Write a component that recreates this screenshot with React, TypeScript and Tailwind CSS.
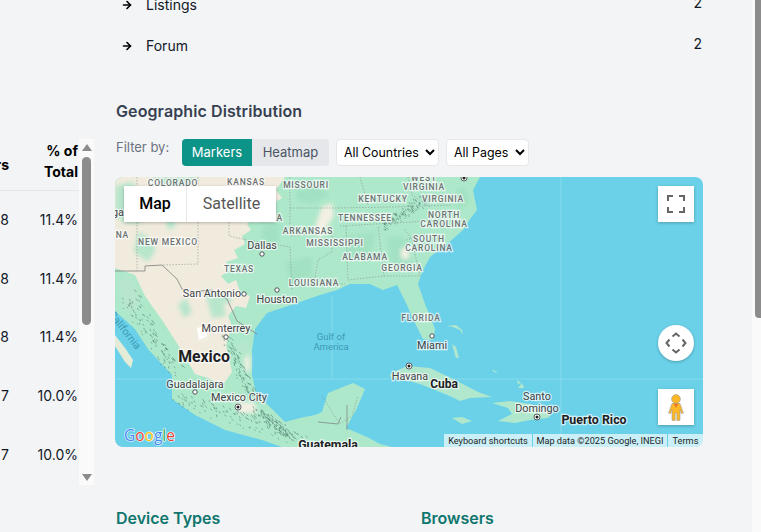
import React from 'react';
import { ArrowRight } from 'lucide-react';

const land =
  'M115 177 L480 177 L473 190 L477 210 L470 219 L463 230 L447 244 L430 257 L422 272 L418 284 L425 304 L435 329 L433 340 L423 339 L413 319 L407 305 L397 285 L383 290 L370 284 L350 284 L337 290 L320 295 L297 303 L267 313 L255 329 L252 350 L252 375 L256 393 L272 409 L285 422 L300 418 L315 415 L322 412 L328 393 L353 383 L365 389 L356 410 L346 428 L367 437 L380 444 L392 447 L282 447 L262 440 L225 430 L195 415 L172 399 L172 375 L148 349 L135 329 L115 311 Z';

const tan =
  'M115 177 L285 177 L276 190 L282 198 L268 206 L256 212 L247 224 L251 230 L242 236 L245 244 L234 250 L238 258 L226 262 L230 270 L221 276 L228 284 L236 280 L240 292 L250 296 L246 308 L236 306 L228 316 L232 326 L226 345 L232 372 L222 386 L208 378 L195 374 L178 345 L162 320 L145 296 L135 275 L115 268 Z';

const greenPatches = [
  'M118 280 L132 276 L140 296 L136 312 L124 308 Z',
  'M115 186 L132 182 L142 196 L150 214 L138 224 L122 222 L115 214 Z',
  'M138 232 L150 238 L156 250 L148 262 L134 252 Z',
  'M205 290 L222 296 L226 316 L212 318 Z',
  'M150 177 L200 177 L190 186 L168 190 Z',
  'M165 215 L172 212 L176 226 L168 230 Z',
  'M222 292 L232 296 L230 304 L222 302 Z',
  'M238 345 L246 340 L248 352 L240 356 Z',
  'M178 305 L186 298 L192 312 L184 318 Z',
];

const greenShades = [
  'M296 190 L320 186 L330 196 L310 204 L296 200 Z',
  'M345 236 L376 232 L372 252 L348 258 Z',
  'M386 238 L404 236 L412 262 L392 268 Z',
  'M452 195 L464 186 L470 200 L458 212 Z',
  'M285 262 L312 256 L312 280 L290 284 Z',
  'M262 226 L282 222 L278 244 L262 242 Z',
];

const lightPatches = [
  'M322 207 L332 203 L334 216 L326 228 L320 240 L315 226 Z',
  'M196 326 L206 322 L210 338 L200 342 Z',
  'M236 402 L254 402 L258 412 L240 414 Z',
  'M244 358 L250 354 L250 370 L245 372 Z',
  'M400 250 L408 246 L410 258 L402 260 Z',
];

const islands = [
  'M390 374 L407 366 L430 368 L457 381 L478 392 L492 397 L470 398 L460 401 L452 397 L440 392 L420 384 L405 380 L391 378 Z',
  'M492 403 L510 401 L530 404 L553 412 L548 418 L530 420 L515 423 L498 421 L512 414 L508 408 Z',
  'M452 418 L462 417 L472 421 L462 424 Z',
  'M452 344 L456 347 L459 358 L456 358 Z',
  'M447 326 L456 325 L462 330 L463 335 L460 330 L453 327 Z',
  'M492 369 L498 373 L494 372 Z',
  'M518 388 L522 383 L524 388 Z',
  'M517 380 L521 383 L518 384 Z',
];

const stateBorders = [
  'M137 177 L137 271',
  'M198 177 L198 264 L162 265',
  'M229 222 L229 236 L247 240 L290 247 L292 290',
  'M290 177 L290 236 L332 232 L332 252 L318 260 L314 284 L345 284',
  'M290 208 L332 208 L392 207 L452 205',
  'M340 226 L412 222 L434 220 L452 228',
  'M346 226 L348 280 L384 276 L378 226',
  'M384 276 L420 276 L412 240 L404 228',
  'M406 240 L428 234',
  'M322 396 L340 424 L352 416 L358 396',
  'M360 177 L368 205',
  'M408 177 L412 195 L430 207',
];

const ranges: [number, number, number, number, number][] = [
  [128, 296, 176, 372, 16],
  [174, 396, 300, 440, 14],
  [226, 338, 254, 400, 10],
  [384, 226, 428, 196, 9],
  [256, 410, 292, 436, 8],
];

// short dark strokes that give the mountain ranges their texture
function rangeStrokes() {
  const out: string[] = [];
  ranges.forEach(([x1, y1, x2, y2, spread]) => {
    for (let i = 0; i < 110; i++) {
      const t = i / 110;
      const a = Math.sin(i * 12.9898 + x1) * 43758.5453;
      const b = Math.sin(i * 78.233 + y1) * 12543.1234;
      const dx = (a - Math.floor(a) - 0.5) * spread;
      const dy = (b - Math.floor(b) - 0.5) * spread;
      const x = x1 + (x2 - x1) * t + dx;
      const y = y1 + (y2 - y1) * t + dy;
      out.push(`M${x.toFixed(1)} ${y.toFixed(1)} l${(1.2 + dx * 0.1).toFixed(1)} ${(1.8 - dy * 0.08).toFixed(1)}`);
    }
  });
  return out.join(' ');
}

type L = { t: string; x: number; y: number; anchor?: 'start' | 'middle' | 'end' };

const states: L[] = [
  { t: 'COLORADO', x: 173, y: 186, anchor: 'middle' },
  { t: 'KANSAS', x: 246, y: 185, anchor: 'middle' },
  { t: 'MISSOURI', x: 306, y: 188, anchor: 'middle' },
  { t: 'WEST', x: 424, y: 181, anchor: 'middle' },
  { t: 'VIRGINIA', x: 424, y: 190, anchor: 'middle' },
  { t: 'KENTUCKY', x: 383, y: 202, anchor: 'middle' },
  { t: 'VIRGINIA', x: 443, y: 202, anchor: 'middle' },
  { t: 'TENNESSEE', x: 365, y: 221, anchor: 'middle' },
  { t: 'NORTH', x: 444, y: 218, anchor: 'middle' },
  { t: 'CAROLINA', x: 444, y: 227, anchor: 'middle' },
  { t: 'OKLAHOMA', x: 283, y: 221, anchor: 'end' },
  { t: 'ARKANSAS', x: 308, y: 234, anchor: 'middle' },
  { t: 'MISSISSIPPI', x: 335, y: 246, anchor: 'middle' },
  { t: 'ALABAMA', x: 365, y: 260, anchor: 'middle' },
  { t: 'SOUTH', x: 429, y: 242, anchor: 'middle' },
  { t: 'CAROLINA', x: 429, y: 251, anchor: 'middle' },
  { t: 'GEORGIA', x: 402, y: 271, anchor: 'middle' },
  { t: 'LOUISIANA', x: 314, y: 286, anchor: 'middle' },
  { t: 'TEXAS', x: 239, y: 272, anchor: 'middle' },
  { t: 'NEW MEXICO', x: 168, y: 245, anchor: 'middle' },
  { t: 'ARIZONA', x: 129, y: 238, anchor: 'end' },
  { t: 'FLORIDA', x: 421, y: 321, anchor: 'middle' },
];

const cities: L[] = [
  { t: 'Dallas', x: 262, y: 249, anchor: 'middle' },
  { t: 'San Antonio', x: 212, y: 297, anchor: 'middle' },
  { t: 'Houston', x: 277, y: 303, anchor: 'middle' },
  { t: 'Monterrey', x: 226, y: 332, anchor: 'middle' },
  { t: 'Guadalajara', x: 195, y: 388, anchor: 'middle' },
  { t: 'Mexico City', x: 239, y: 401, anchor: 'middle' },
  { t: 'Miami', x: 432, y: 349, anchor: 'middle' },
  { t: 'Havana', x: 410, y: 380, anchor: 'middle' },
  { t: 'Santo', x: 537, y: 400, anchor: 'middle' },
  { t: 'Domingo', x: 537, y: 412, anchor: 'middle' },
  { t: 'Vega', x: 124, y: 216, anchor: 'end' },
];

const countries: (L & { size: number })[] = [
  { t: 'Mexico', x: 204, y: 362, anchor: 'middle', size: 15.8 },
  { t: 'Cuba', x: 444, y: 388, anchor: 'middle', size: 12 },
  { t: 'Puerto Rico', x: 594, y: 424, anchor: 'middle', size: 12.4 },
  { t: 'Guatemala', x: 328, y: 449, anchor: 'middle', size: 12.3 },
];

const openDots = [
  [262, 254],
  [244, 294],
  [277, 290],
  [226, 337],
  [195, 392],
  [432, 336],
];

const capitals = [
  [238, 407],
  [409, 366],
  [537, 417],
  [464, 178],
];

const halo = { paintOrder: 'stroke' as const, stroke: '#ffffff', strokeWidth: 2.4, strokeOpacity: 0.7 };

function MapDrawing() {
  return (
    <svg viewBox="115 177 588 270" className="block h-full w-full font-['Roboto',sans-serif]">
      <defs>
        <filter id="soft" x="0" y="0" width="100%" height="100%">
          <feGaussianBlur stdDeviation="0.7" />
        </filter>
        <filter id="softer" x="-10%" y="-10%" width="120%" height="120%">
          <feGaussianBlur stdDeviation="2" />
        </filter>
      </defs>
      <rect x="115" y="177" width="588" height="270" fill="#6ad1e8" />
      <path d="M561 177 V447 M332 296 V380 M115 379 H703" stroke="#86dbee" strokeWidth="1" fill="none" />
      <g filter="url(#soft)">
        <path d={land} fill="#aee8cb" />
      </g>
      <g filter="url(#softer)">
        {greenShades.map((d) => (
          <path key={d} d={d} fill="#a2e2c3" />
        ))}
      </g>
      <g filter="url(#soft)">
        <path d={tan} fill="#f0ebdd" />
      </g>
      <g filter="url(#softer)">
        {greenPatches.map((d) => (
          <path key={d} d={d} fill="#b8e6cc" />
        ))}
        {lightPatches.map((d) => (
          <path key={d} d={d} fill="#f3efe3" />
        ))}
      </g>
      <g filter="url(#soft)">
        <path d="M197 328 L205 326 L207 336 L199 340 Z" fill="#ffffff" />
        <path d="M115 335 L125 348 L133 360 L131 368 L125 362 L115 346 Z" fill="#e4ecd8" />
        {islands.map((d) => (
          <path key={d} d={d} fill="#b1e8cd" />
        ))}
        <path d={rangeStrokes()} stroke="#4f7f6d" strokeWidth="0.8" strokeOpacity="0.7" fill="none" />
      </g>
      <path d={stateBorders.join(' ')} stroke="#7f8a86" strokeOpacity="0.75" strokeWidth="0.7" strokeDasharray="1.5 1.5" fill="none" />
      <path d="M115 271 L145 271 L145 266 L162 265 L177 279 L182 289 L190 292 L212 290 L227 299 L237 321 L257 334" stroke="#8a8a86" strokeWidth="0.9" fill="none" />
      <path d="M318 422 L338 424 L341 417 M347 405 V430" stroke="#7f8a86" strokeWidth="0.8" fill="none" />

      <text x="136" y="350" textAnchor="end" transform="rotate(52 136 350)" fontSize="10.5" fill="#3d9ab5">
        California
      </text>
      <text x="331" y="340" textAnchor="middle" fontSize="9.5" fill="#3d9ab5">
        Gulf of
      </text>
      <text x="331" y="350" textAnchor="middle" fontSize="9.5" fill="#3d9ab5">
        America
      </text>

      {states.map((l) => (
        <text key={l.t + l.x} x={l.x} y={l.y} textAnchor={l.anchor} fontSize="8.5" letterSpacing="0.8" fontWeight="500" fill="#6b7271" style={halo}>
          {l.t}
        </text>
      ))}
      {cities.map((l) => (
        <text key={l.t} x={l.x} y={l.y} textAnchor={l.anchor} fontSize="10.8" fill="#3e4245" style={halo}>
          {l.t}
        </text>
      ))}
      {countries.map((l) => (
        <text key={l.t} x={l.x} y={l.y} textAnchor={l.anchor} fontSize={l.size} fontWeight="700" fill="#202124" style={halo}>
          {l.t}
        </text>
      ))}
      {openDots.map(([x, y]) => (
        <circle key={`${x}-${y}`} cx={x} cy={y} r="2.2" fill="#ffffff" stroke="#4d5156" strokeWidth="1" />
      ))}
      {capitals.map(([x, y]) => (
        <g key={`${x}-${y}`}>
          <circle cx={x} cy={y} r="3" fill="#ffffff" stroke="#3c4043" strokeWidth="0.8" />
          <circle cx={x} cy={y} r="1.5" fill="#202124" />
        </g>
      ))}

      <text x="124" y="441" fontSize="15.5" fontWeight="500" fontFamily="'Open Sans', sans-serif" stroke="#ffffff" strokeWidth="1.2" style={{ paintOrder: 'stroke' }}>
        <tspan fill="#4285f4">G</tspan>
        <tspan fill="#ea4335">o</tspan>
        <tspan fill="#fbbc05">o</tspan>
        <tspan fill="#4285f4">g</tspan>
        <tspan fill="#34a853">l</tspan>
        <tspan fill="#ea4335">e</tspan>
      </text>
    </svg>
  );
}

function Pegman() {
  return (
    <svg width="16" height="27" viewBox="0 0 16 27">
      <circle cx="8" cy="5" r="4.4" fill="#fdb827" stroke="#9a9a9a" strokeWidth="0.6" />
      <path
        d="M4 9.5 H12 L15.4 19 L13.4 19.6 L12 15.5 V26.4 H8.8 V19 H7.2 V26.4 H4 V15.5 L2.6 19.6 L0.6 19 Z"
        fill="#fdb827"
        stroke="#9a9a9a"
        strokeWidth="0.6"
      />
      <path d="M5.6 9.6 H10.4 L8 14 Z" fill="#e8792b" />
    </svg>
  );
}

function GoogleMap() {
  return (
    <div className="relative mt-[11px] h-[270px] w-[588px] overflow-hidden rounded-lg">
      <MapDrawing />

      <div className="absolute left-[9px] top-[9px] flex h-9 bg-white font-['Roboto',sans-serif] text-[16px] shadow-[0_1px_3px_rgba(0,0,0,0.25)]">
        <div className="flex w-[62px] items-center justify-center font-medium text-black">Map</div>
        <div className="flex w-[90px] items-center justify-center border-l border-[#e6e6e6] text-[#565656]">Satellite</div>
      </div>

      <div className="absolute right-[9px] top-[9px] flex h-9 w-9 items-center justify-center bg-white shadow-[0_1px_3px_rgba(0,0,0,0.25)]">
        <svg width="18" height="18" viewBox="0 0 18 18" fill="none" stroke="#666666" strokeWidth="2">
          <path d="M1 6 V1 H6 M12 1 H17 V6 M17 12 V17 H12 M6 17 H1 V12" />
        </svg>
      </div>

      <div className="absolute right-[9px] top-[148px] flex h-9 w-9 items-center justify-center rounded-full bg-white shadow-[0_1px_3px_rgba(0,0,0,0.25)]">
        <svg width="22" height="22" viewBox="0 0 22 22" fill="none" stroke="#666666" strokeWidth="2">
          <path d="M7.5 4.5 L11 1.5 L14.5 4.5 M7.5 17.5 L11 20.5 L14.5 17.5 M4.5 7.5 L1.5 11 L4.5 14.5 M17.5 7.5 L20.5 11 L17.5 14.5" />
        </svg>
      </div>

      <div className="absolute right-[9px] top-[212px] flex h-9 w-9 items-center justify-center bg-white shadow-[0_1px_3px_rgba(0,0,0,0.25)]">
        <Pegman />
      </div>

      <div className="absolute bottom-0 right-0 flex h-[13px] items-center gap-px whitespace-nowrap font-['Roboto',sans-serif] text-[9.2px] leading-none text-[#1f1f1f]">
        <span className="flex h-full w-[88px] items-center justify-center bg-white/65">Keyboard shortcuts</span>
        <span className="flex h-full w-[134px] items-center justify-center bg-white/65">Map data ©2025 Google, INEGI</span>
        <span className="flex h-full w-[35px] items-center justify-center bg-white/65">Terms</span>
      </div>
    </div>
  );
}

const tableRows = [
  ['8', '11.4%'],
  ['8', '11.4%'],
  ['8', '11.4%'],
  ['7', '10.0%'],
  ['7', '10.0%'],
];

function SideTable() {
  return (
    <div className="w-[94px] shrink-0 pt-[139px]">
      <div className="flex h-[346px]">
        <div className="w-[79px] overflow-hidden">
          <div className="flex h-[52px] border-b border-[#e5e7eb] text-sm font-bold text-black">
            <div className="flex w-[9px] shrink-0 items-center justify-end whitespace-nowrap">Visitors</div>
            <div className="flex-1 pr-px pt-px text-right leading-[21px]">
              % of
              <br />
              Total
            </div>
          </div>
          {tableRows.map(([n, pct], i) => (
            <div key={i} className="flex h-[58.6px] items-center text-sm text-[#111827]">
              <div className="w-[9px] shrink-0 text-right">{n}</div>
              <div className="flex-1 pr-px text-right">{pct}</div>
            </div>
          ))}
        </div>
        <div className="flex w-[15px] flex-col items-center bg-[#fafafa]">
          <div className="mt-[5px] h-0 w-0 border-x-[5px] border-b-[7px] border-x-transparent border-b-[#8c8c8c]" />
          <div className="mt-[6px] h-[168px] w-[9px] rounded-[5px] bg-[#8c8c8c]" />
          <div className="mt-auto mb-[4px] h-0 w-0 border-x-[5px] border-t-[7px] border-x-transparent border-t-[#8c8c8c]" />
        </div>
      </div>
    </div>
  );
}

function LinkRow({ label, count }: { label: string; count: number }) {
  return (
    <div className="flex h-[41px] items-center text-sm text-[#111827]">
      <ArrowRight size={12} strokeWidth={3.2} className="ml-[6px] text-black" />
      <span className="ml-[13px] flex-1">{label}</span>
      <span className="mb-[4px] mr-px">{count}</span>
    </div>
  );
}

export default function App() {
  return (
    <div className="flex h-[532px] overflow-hidden bg-[#f3f4f6] font-['Inter',sans-serif]">
      <SideTable />

      <main className="w-[658px] shrink-0 pl-[21px] pr-[49px]">
        <div className="-mt-[16px]">
          <LinkRow label="Listings" count={2} />
          <LinkRow label="Forum" count={2} />
        </div>

        <h2 className="ml-px mt-[33px] text-base font-semibold tracking-[0.1px] text-[#374151]">Geographic Distribution</h2>

        <div className="mt-4 flex items-start">
          <span className="ml-px mt-[-1px] w-[66px] text-[13px] leading-[18px] text-[#6b7280]">Filter by:</span>
          <div className="flex h-[27px] w-[147px] rounded bg-[#e5e7eb] text-[13px]">
            <button className="w-[70px] rounded-l bg-[#0d9488] text-white">Markers</button>
            <button className="flex-1 text-[#4b5563]">Heatmap</button>
          </div>
          <select className="ml-[7px] h-[27px] w-[103px] rounded border border-[#e5e7eb] bg-white pl-[3px] text-[12.4px] text-black">
            <option>All Countries</option>
          </select>
          <select className="ml-[7px] h-[27px] w-[83px] rounded border border-[#e5e7eb] bg-white pl-[3px] text-[12.4px] text-black">
            <option>All Pages</option>
          </select>
        </div>

        <GoogleMap />

        <div className="ml-px mt-[59px] grid grid-cols-[305px_1fr] text-base font-semibold text-[#0f766e]">
          <h3>Device Types</h3>
          <h3>Browsers</h3>
        </div>
      </main>

      <div className="w-[9px] shrink-0 bg-[#fafafa]">
        <div className="ml-[3px] h-[318px] w-[6px] rounded-bl-[4px] bg-[#8c8c8c]" />
      </div>
    </div>
  );
}
